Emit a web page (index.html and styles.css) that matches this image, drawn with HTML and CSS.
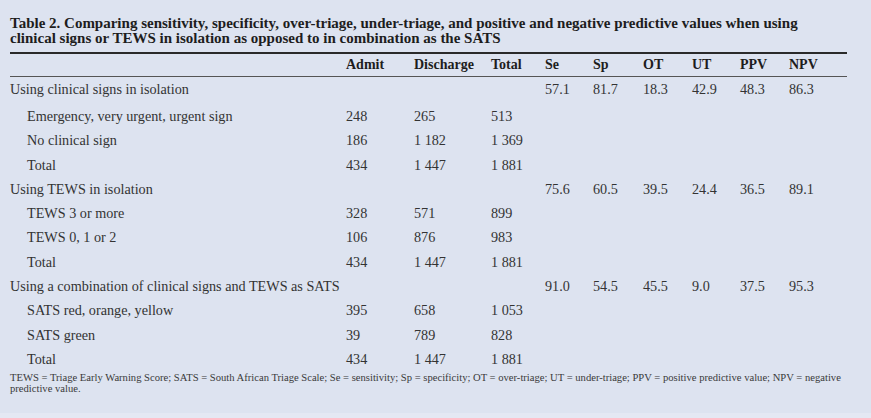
FILE: index.html
```html
<!DOCTYPE html>
<html>
<head>
<meta charset="utf-8">
<link rel="stylesheet" href="styles.css">
</head>
<body>
<div class="panel">
  <h1 class="title">Table 2. Comparing sensitivity, specificity, over-triage, under-triage, and positive and negative predictive values when using clinical signs or TEWS in isolation as opposed to in combination as the SATS</h1>
  <table class="data">
    <colgroup>
      <col class="c-label"><col class="c-admit"><col class="c-dis"><col class="c-total"><col class="c-se"><col class="c-sp"><col class="c-ot"><col class="c-ut"><col class="c-ppv"><col class="c-npv">
    </colgroup>
    <thead>
      <tr><th></th><th>Admit</th><th>Discharge</th><th>Total</th><th>Se</th><th>Sp</th><th>OT</th><th>UT</th><th>PPV</th><th>NPV</th></tr>
    </thead>
    <tbody>
      <tr class="first"><td>Using clinical signs in isolation</td><td></td><td></td><td></td><td>57.1</td><td>81.7</td><td>18.3</td><td>42.9</td><td>48.3</td><td>86.3</td></tr>
      <tr><td class="sub">Emergency, very urgent, urgent sign</td><td>248</td><td>265</td><td>513</td><td></td><td></td><td></td><td></td><td></td><td></td></tr>
      <tr><td class="sub">No clinical sign</td><td>186</td><td>1 182</td><td>1 369</td><td></td><td></td><td></td><td></td><td></td><td></td></tr>
      <tr><td class="sub">Total</td><td>434</td><td>1 447</td><td>1 881</td><td></td><td></td><td></td><td></td><td></td><td></td></tr>
      <tr><td>Using TEWS in isolation</td><td></td><td></td><td></td><td>75.6</td><td>60.5</td><td>39.5</td><td>24.4</td><td>36.5</td><td>89.1</td></tr>
      <tr><td class="sub">TEWS 3 or more</td><td>328</td><td>571</td><td>899</td><td></td><td></td><td></td><td></td><td></td><td></td></tr>
      <tr><td class="sub">TEWS 0, 1 or 2</td><td>106</td><td>876</td><td>983</td><td></td><td></td><td></td><td></td><td></td><td></td></tr>
      <tr><td class="sub">Total</td><td>434</td><td>1 447</td><td>1 881</td><td></td><td></td><td></td><td></td><td></td><td></td></tr>
      <tr><td>Using a combination of clinical signs and TEWS as SATS</td><td></td><td></td><td></td><td>91.0</td><td>54.5</td><td>45.5</td><td>9.0</td><td>37.5</td><td>95.3</td></tr>
      <tr><td class="sub">SATS red, orange, yellow</td><td>395</td><td>658</td><td>1 053</td><td></td><td></td><td></td><td></td><td></td><td></td></tr>
      <tr><td class="sub">SATS green</td><td>39</td><td>789</td><td>828</td><td></td><td></td><td></td><td></td><td></td><td></td></tr>
      <tr><td class="sub">Total</td><td>434</td><td>1 447</td><td>1 881</td><td></td><td></td><td></td><td></td><td></td><td></td></tr>
    </tbody>
  </table>
  <p class="note">TEWS = Triage Early Warning Score; SATS = South African Triage Scale; Se = sensitivity; Sp = specificity; OT = over-triage; UT = under-triage; PPV = positive predictive value; NPV = negative predictive value.</p>
</div>
</body>
</html>
```

FILE: styles.css
```css
html, body {
  margin: 0;
  padding: 0;
  background: #e4e8f3;
}

body {
  width: 871px;
  height: 418px;
  overflow: hidden;
  font-family: "Liberation Serif", "DejaVu Serif", serif;
  color: #2b2b2b;
}

.panel {
  background: #dde3f0;
  height: 413px;
  box-sizing: border-box;
  padding: 16px 24px 0 10px;
}

.title {
  margin: 0 0 7px 0;
  font-size: 15px;
  line-height: 14.5px;
  font-weight: bold;
  color: #1d1d1d;
  padding-right: 30px;
}

.data {
  width: 837px;
  border-collapse: collapse;
  table-layout: fixed;
  font-size: 14.2px;
  color: #333;
}

.c-label { width: 336px; }
.c-admit { width: 68px; }
.c-dis { width: 77px; }
.c-total { width: 54px; }
.c-se { width: 48px; }
.c-sp { width: 50px; }
.c-ot { width: 49px; }
.c-ut { width: 48px; }
.c-ppv { width: 49px; }
.c-npv { width: 58px; }

.data thead tr {
  border-top: 2px solid #2a2a2a;
  border-bottom: 1px solid #555;
}

.data th {
  height: 22px;
  padding: 0;
  text-align: left;
  font-size: 14px;
  font-weight: bold;
  color: #1d1d1d;
  line-height: 22px;
  white-space: nowrap;
}

.data td {
  height: 24.3px;
  padding: 0;
  text-align: left;
  line-height: 24.3px;
  white-space: nowrap;
}

.data tr.first td {
  height: 27px;
  line-height: 24px;
  vertical-align: top;
}

.data td.sub {
  padding-left: 17px;
}

.note {
  margin: 0;
  padding-top: 2px;
  font-size: 10.6px;
  line-height: 10.5px;
  color: #3a3a3a;
}
```
